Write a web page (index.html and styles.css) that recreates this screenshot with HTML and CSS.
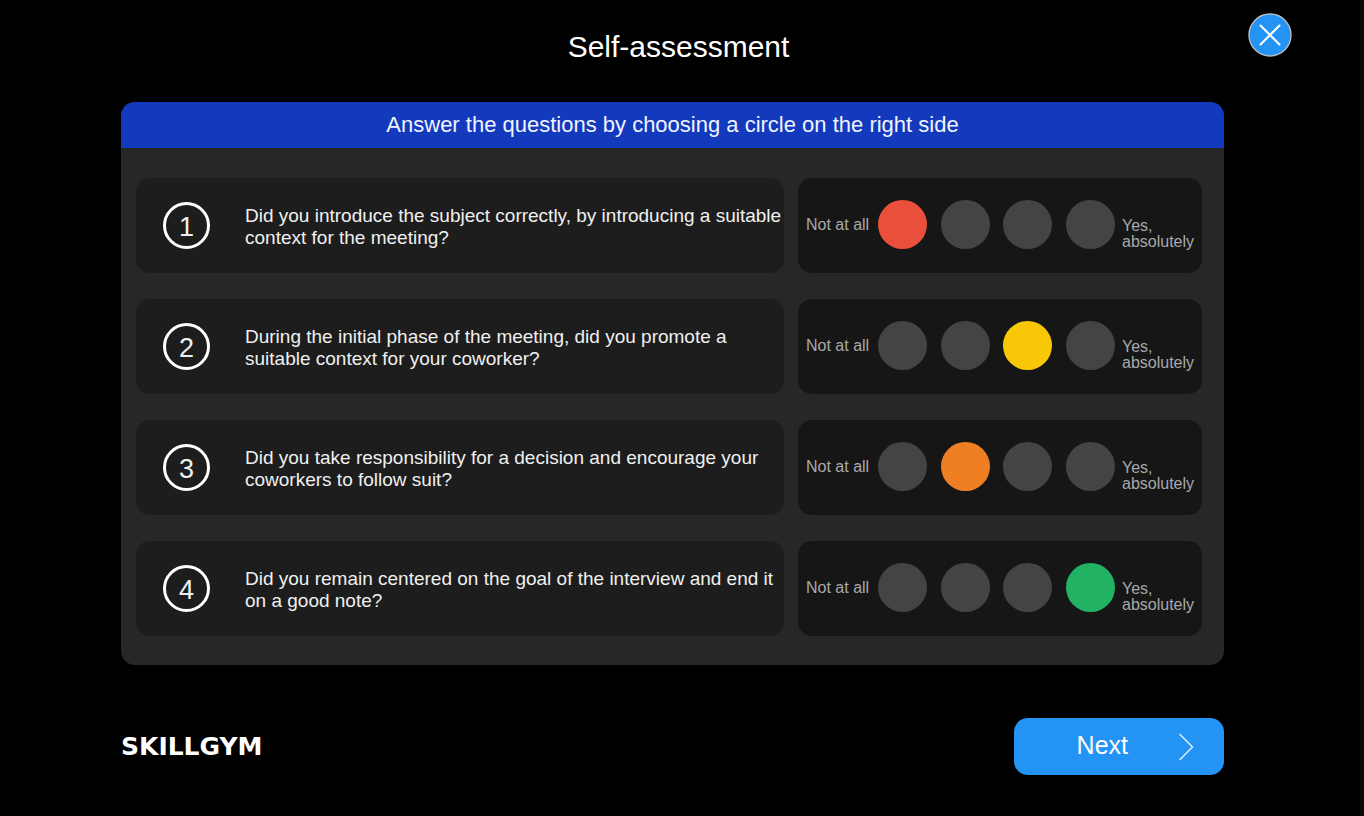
FILE: index.html
```html
<!DOCTYPE html>
<html lang="en">
<head>
    <meta charset="UTF-8">
    <meta name="viewport" content="width=device-width, initial-scale=1.0">
    <title>Self-assessment</title>
    <link rel="stylesheet" href="styles.css">
</head>
<body>

    <header class="top-bar">
        <h1>Self-assessment</h1>
        <button class="close-button" type="button" aria-label="Close">
            <svg viewBox="0 0 44 44" width="44" height="44">
                <circle cx="22" cy="22" r="21" fill="#2494f4" stroke="#b4bcc4" stroke-width="1.4"/>
                <path d="M12.5 12.5 L31.5 31.5 M31.5 12.5 L12.5 31.5" stroke="#fff" stroke-width="2" stroke-linecap="round"/>
            </svg>
        </button>
    </header>

    <main class="panel">
        <h2>Answer the questions by choosing a circle on the right side</h2>
        <div class="rows">

            <div class="row">
                <div class="question">
                    <span class="number">1</span>
                    <p id="text1">Did you introduce the subject correctly, by introducing a suitable context for the meeting?</p>
                </div>
                <div class="rating" role="radiogroup" aria-labelledby="text1">
                    <label for="q1-1">Not at all</label>
                    <div class="circles">
                        <input type="radio" class="red" name="q1" id="q1-1" checked>
                        <input type="radio" class="orange" name="q1" id="q1-2" aria-label="2">
                        <input type="radio" class="yellow" name="q1" id="q1-3" aria-label="3">
                        <input type="radio" class="green" name="q1" id="q1-4">
                    </div>
                    <label for="q1-4" class="last">Yes, absolutely</label>
                </div>
            </div>

            <div class="row">
                <div class="question">
                    <span class="number">2</span>
                    <p id="text2">During the initial phase of the meeting, did you promote a suitable context for your coworker?</p>
                </div>
                <div class="rating" role="radiogroup" aria-labelledby="text2">
                    <label for="q2-1">Not at all</label>
                    <div class="circles">
                        <input type="radio" class="red" name="q2" id="q2-1">
                        <input type="radio" class="orange" name="q2" id="q2-2" aria-label="2">
                        <input type="radio" class="yellow" name="q2" id="q2-3" aria-label="3" checked>
                        <input type="radio" class="green" name="q2" id="q2-4">
                    </div>
                    <label for="q2-4" class="last">Yes, absolutely</label>
                </div>
            </div>

            <div class="row">
                <div class="question">
                    <span class="number">3</span>
                    <p id="text3">Did you take responsibility for a decision and encourage your coworkers to follow suit?</p>
                </div>
                <div class="rating" role="radiogroup" aria-labelledby="text3">
                    <label for="q3-1">Not at all</label>
                    <div class="circles">
                        <input type="radio" class="red" name="q3" id="q3-1">
                        <input type="radio" class="orange" name="q3" id="q3-2" aria-label="2" checked>
                        <input type="radio" class="yellow" name="q3" id="q3-3" aria-label="3">
                        <input type="radio" class="green" name="q3" id="q3-4">
                    </div>
                    <label for="q3-4" class="last">Yes, absolutely</label>
                </div>
            </div>

            <div class="row">
                <div class="question">
                    <span class="number">4</span>
                    <p id="text4">Did you remain centered on the goal of the interview and end it on a good note?</p>
                </div>
                <div class="rating" role="radiogroup" aria-labelledby="text4">
                    <label for="q4-1">Not at all</label>
                    <div class="circles">
                        <input type="radio" class="red" name="q4" id="q4-1">
                        <input type="radio" class="orange" name="q4" id="q4-2" aria-label="2">
                        <input type="radio" class="yellow" name="q4" id="q4-3" aria-label="3">
                        <input type="radio" class="green" name="q4" id="q4-4" checked>
                    </div>
                    <label for="q4-4" class="last">Yes, absolutely</label>
                </div>
            </div>

        </div>
    </main>

    <footer class="bottom-bar">
        <div class="logo">SKILLGYM</div>
        <button class="next-button" type="button">
            <span>Next</span>
            <svg viewBox="0 0 16 28" width="16" height="28">
                <path d="M1.5 1 L14.5 14 L1.5 27" fill="none" stroke="#e4f2ff" stroke-width="1.4"/>
            </svg>
        </button>
    </footer>

</body>
</html>
```
FILE: styles.css
```css
* {
    margin: 0;
    padding: 0;
    box-sizing: border-box;
}

body {
    font-family: "Liberation Sans", Arial, sans-serif;
    min-height: 100vh;
    padding: 0 136px 0 121px;
    border-right: 4px solid #0a0a0a;
    background: #000;
    color: #fff;
}

.top-bar {
    display: grid;
    grid-template-columns: 1fr auto;
    align-items: start;
    height: 102px;
    margin-right: -68px;
    padding-top: 13px;
}

h1 {
    padding: 17px 12px 0 0;
    font-size: 30px;
    line-height: 34px;
    font-weight: 400;
    text-align: center;
}

button {
    border: none;
    background: none;
    color: #fff;
    font-family: inherit;
    cursor: pointer;
}

.close-button {
    width: 44px;
    height: 44px;
}

.panel {
    border-radius: 14px;
    background: #272727;
    overflow: hidden;
}

h2 {
    background: #1339bd;
    color: #f0f4ff;
    font-size: 22px;
    line-height: 46px;
    font-weight: 400;
    text-align: center;
}

.rows {
    display: flex;
    flex-direction: column;
    gap: 26px;
    padding: 30px 22px 29px 15px;
}

.row {
    display: grid;
    grid-template-columns: 1fr 404px;
    gap: 14px;
}

.question,
.rating {
    display: flex;
    align-items: center;
    min-height: 95px;
    border-radius: 14px;
}

.question {
    gap: 35px;
    padding-left: 27px;
    background: #1d1d1d;
    color: #f0f0f0;
    font-size: 19px;
    line-height: 22px;
}

.question p {
    padding-top: 3px;
}

.number {
    flex: none;
    width: 47px;
    height: 47px;
    border: 3px solid #fff;
    border-radius: 50%;
    font-size: 27px;
    line-height: 44px;
    text-align: center;
}

.rating {
    gap: 7px;
    padding: 0 6px 2px 8px;
    background: #161616;
    color: #a9a9a9;
    font-size: 16px;
    line-height: 16px;
}

.rating label {
    flex: none;
    width: 65px;
    white-space: nowrap;
}

.rating .last {
    width: 74px;
    padding-top: 18px;
    white-space: normal;
}

.circles {
    display: flex;
    flex: 1;
    justify-content: space-between;
}

.circles input {
    appearance: none;
    width: 49px;
    height: 49px;
    border-radius: 50%;
    background: #444;
    cursor: pointer;
}

.circles .red:checked {
    background: #e94f3a;
}

.circles .orange:checked {
    background: #ee7f22;
}

.circles .yellow:checked {
    background: #f8c808;
}

.circles .green:checked {
    background: #22b264;
}

.bottom-bar {
    display: flex;
    justify-content: space-between;
    align-items: center;
    padding-top: 53px;
}

.logo {
    font-family: "DejaVu Sans", Verdana, sans-serif;
    font-size: 25px;
    font-weight: 700;
    line-height: 28px;
}

.next-button {
    display: flex;
    justify-content: flex-end;
    align-items: center;
    gap: 50px;
    width: 210px;
    height: 57px;
    padding: 0 30px 0 0;
    border-radius: 14px;
    background: #2494f4;
    font-size: 25px;
}

.next-button span {
    padding-bottom: 3px;
}
```
